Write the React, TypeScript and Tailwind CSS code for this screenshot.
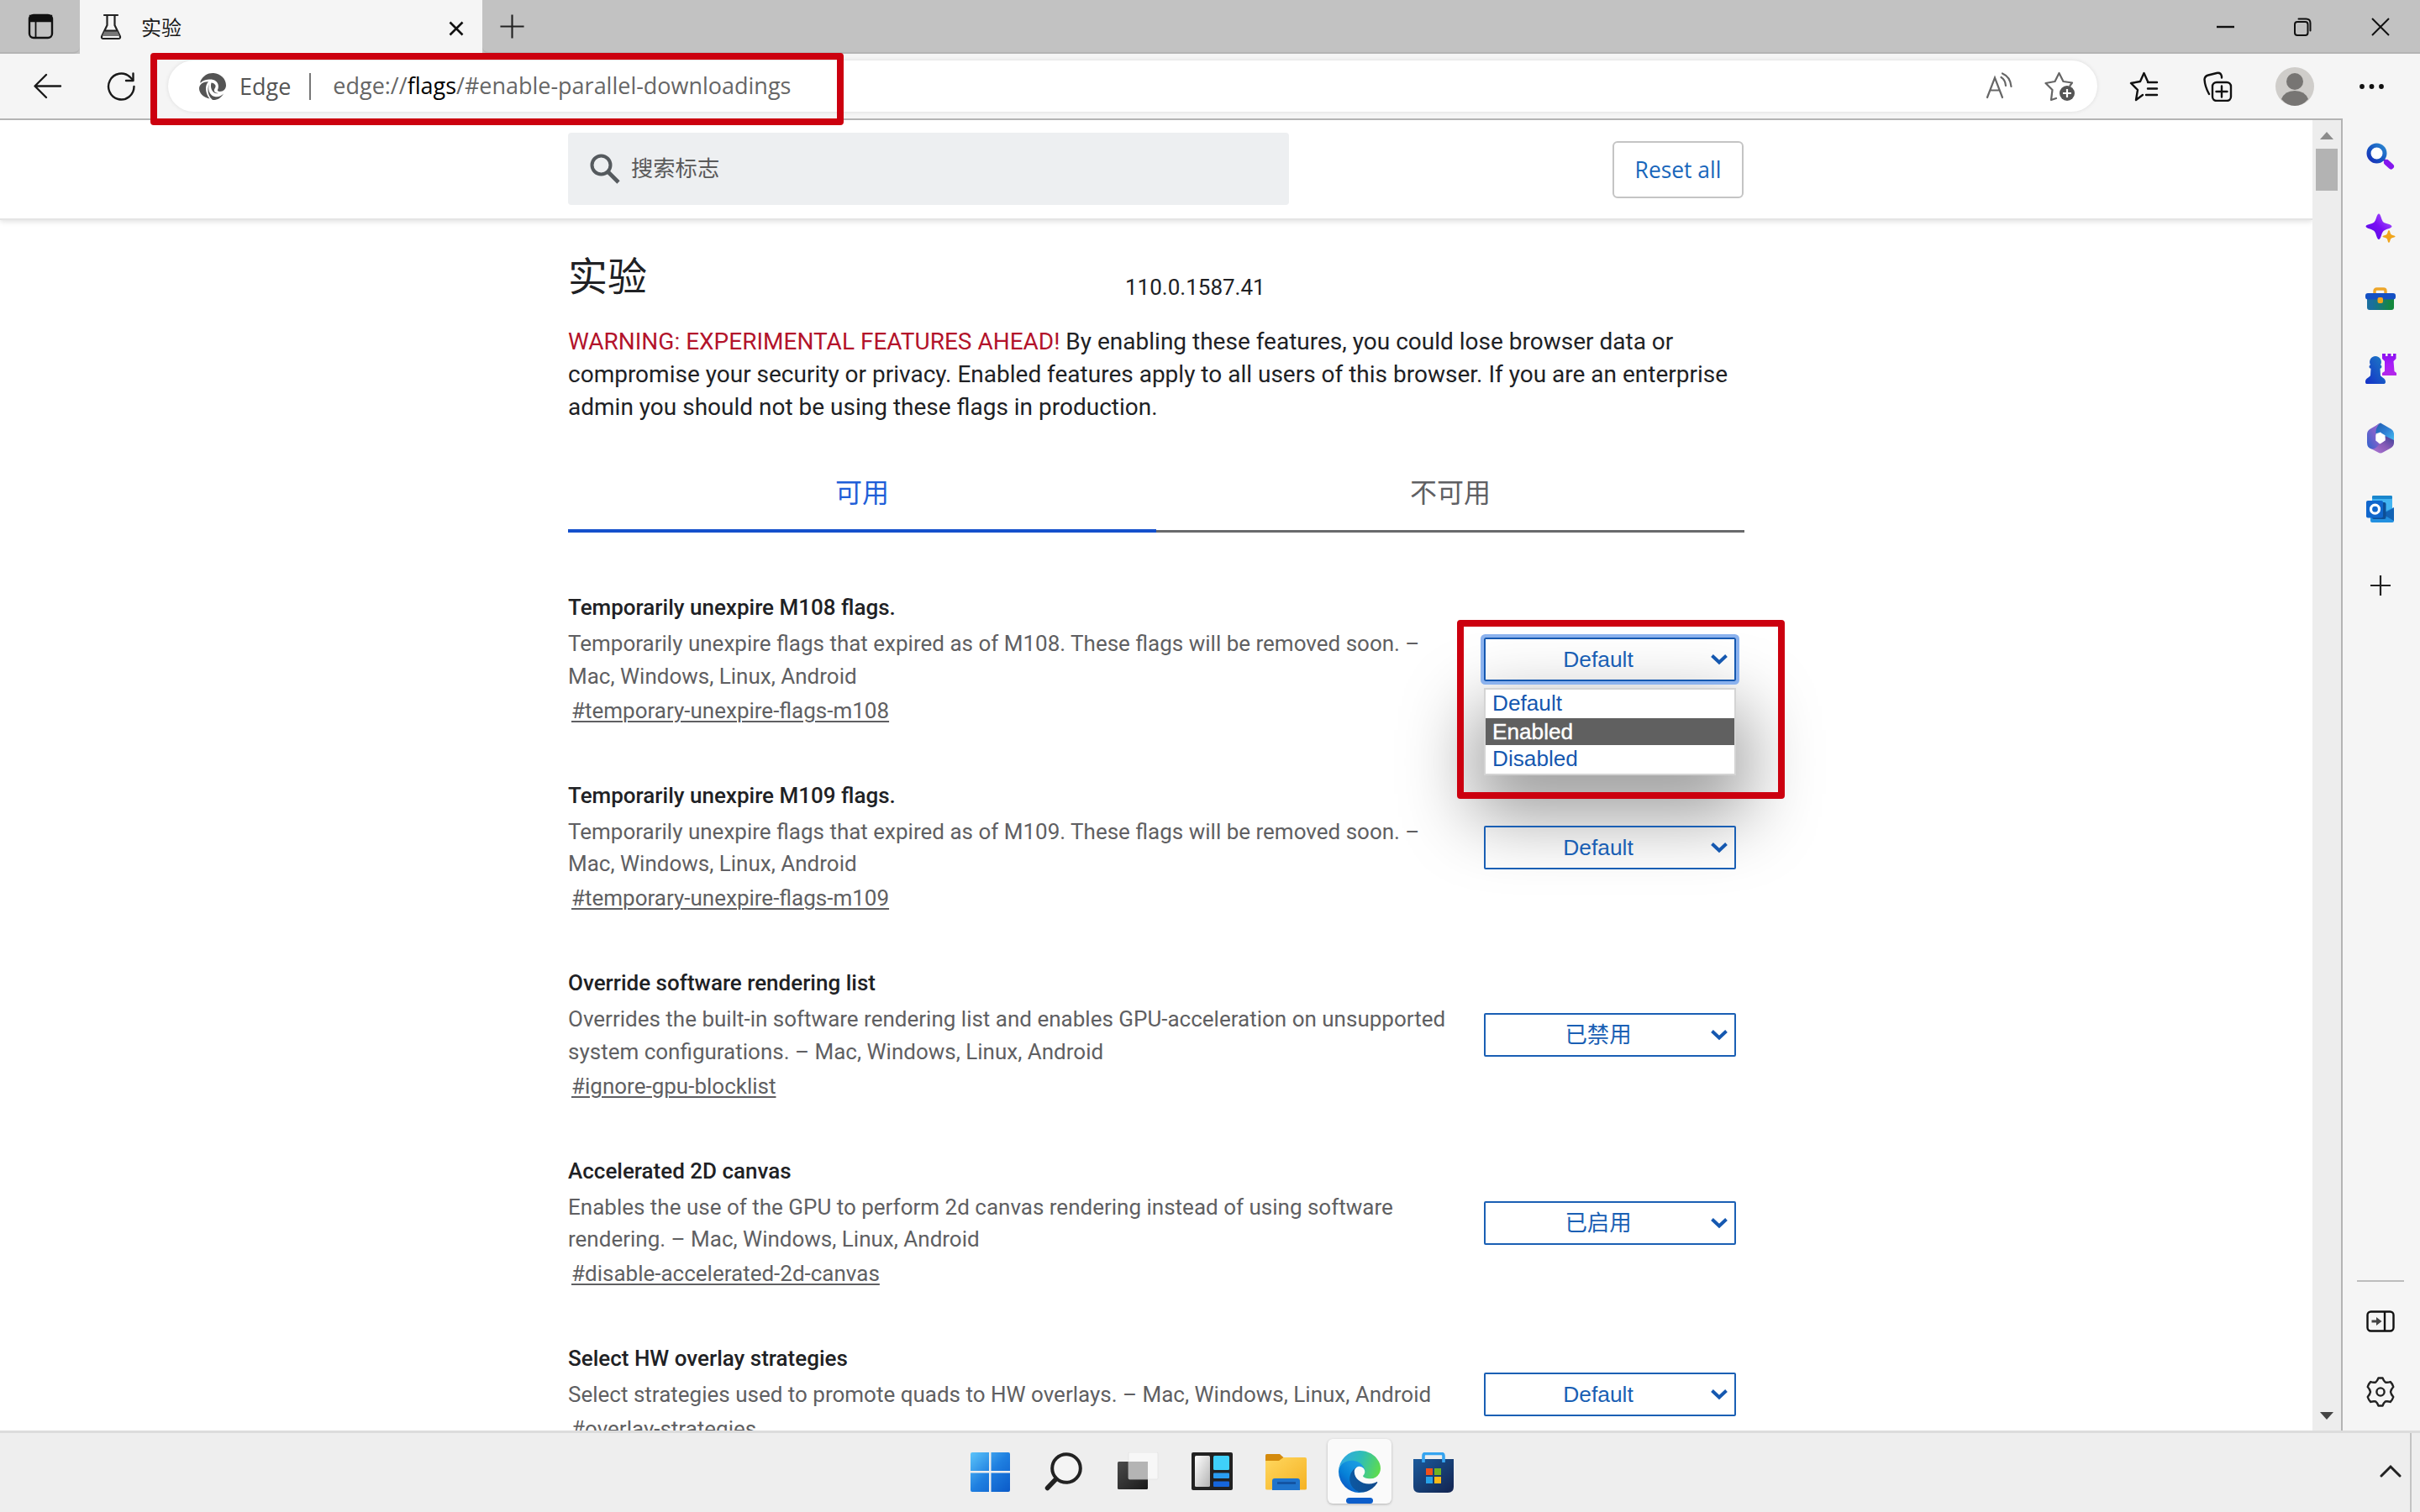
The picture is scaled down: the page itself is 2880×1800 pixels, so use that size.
import React from "react";

type Flag = { title: string; lines: string[]; link: string; value: string; open?: boolean };

const flags: Flag[] = [
  {
    title: "Temporarily unexpire M108 flags.",
    lines: ["Temporarily unexpire flags that expired as of M108. These flags will be removed soon. –", "Mac, Windows, Linux, Android"],
    link: "#temporary-unexpire-flags-m108",
    value: "Default",
    open: true,
  },
  {
    title: "Temporarily unexpire M109 flags.",
    lines: ["Temporarily unexpire flags that expired as of M109. These flags will be removed soon. –", "Mac, Windows, Linux, Android"],
    link: "#temporary-unexpire-flags-m109",
    value: "Default",
  },
  {
    title: "Override software rendering list",
    lines: ["Overrides the built-in software rendering list and enables GPU-acceleration on unsupported", "system configurations. – Mac, Windows, Linux, Android"],
    link: "#ignore-gpu-blocklist",
    value: "已禁用",
  },
  {
    title: "Accelerated 2D canvas",
    lines: ["Enables the use of the GPU to perform 2d canvas rendering instead of using software", "rendering. – Mac, Windows, Linux, Android"],
    link: "#disable-accelerated-2d-canvas",
    value: "已启用",
  },
  {
    title: "Select HW overlay strategies",
    lines: ["Select strategies used to promote quads to HW overlays. – Mac, Windows, Linux, Android"],
    link: "#overlay-strategies",
    value: "Default",
  },
];

function TabStrip() {
  return (
    <div className="flex h-16 shrink-0 bg-[#c2c2c2]">
      <div className="flex w-[95px] items-center rounded-br-lg border-b-2 border-[#b4b4b4] pl-[33px]">
        <svg width="31" height="31" viewBox="0 0 31 31" fill="none" stroke="#111" strokeWidth="2.4">
          <rect x="2" y="2" width="27" height="27" rx="5" />
          <path d="M3 3h25v6H3z" fill="#111" />
          <path d="M9.5 9v20" strokeWidth="1.8" />
        </svg>
      </div>
      <div className="flex w-[479px] items-center bg-[#f5f5f5] pl-[24px]">
        <svg width="26" height="32" viewBox="0 0 26 32" fill="none" stroke="#222" strokeWidth="2.2" strokeLinejoin="round" strokeLinecap="round">
          <path d="M5 2h16M8.5 2v12L2 27.500Q1.500 30 4 30h18q2.500 0 2-2.500L17.500 14V2" />
          <path d="M6 20h14l3.500 7H2.500z" fill="#777" stroke="none" />
          <path d="M6 20.500h14" strokeWidth="1.800" />
        </svg>
        <span className="ml-[23px] text-[24px] leading-none text-[#1a1a1a]">实验</span>
        <svg className="mt-[3px] mr-[22px] ml-auto" width="18" height="18" viewBox="0 0 18 18" stroke="#111" strokeWidth="2.6">
          <path d="M1.500 1.500l15 15M16.500 1.500l-15 15" />
        </svg>
      </div>
      <div className="flex flex-1 items-center rounded-bl-lg border-b-2 border-[#b4b4b4] pl-[20px]">
        <svg width="31" height="31" viewBox="0 0 32 32" stroke="#222" strokeWidth="2.2">
          <path d="M16 1.500v29M1.500 16h29" />
        </svg>
        <div className="ml-auto flex items-center gap-[71px] pt-[2px] pr-[36px]">
          <svg width="21" height="22" viewBox="0 0 21 22" stroke="#111" strokeWidth="2.400">
            <path d="M0 11h21" />
          </svg>
          <svg width="21" height="22" viewBox="0 0 21 22" fill="none" stroke="#111" strokeWidth="2">
            <rect x="1" y="5" width="15.500" height="16" rx="3" />
            <path d="M5.500 1.500h9q5 0 5 5v9" strokeLinecap="round" />
          </svg>
          <svg width="22" height="22" viewBox="0 0 22 22" stroke="#111" strokeWidth="2">
            <path d="M1 1l20 20M21 1L1 21" />
          </svg>
        </div>
      </div>
    </div>
  );
}

function Toolbar() {
  return (
    <div className="flex h-[77px] shrink-0 bg-[#f5f5f5] font-['Open_Sans','Noto_Sans_CJK_SC',sans-serif]">
      <div className="flex w-[200px] items-center pl-[39px]">
        <svg width="35" height="32" viewBox="0 0 35 32" fill="none" stroke="#1a1a1a" strokeWidth="2.400" strokeLinecap="round" strokeLinejoin="round">
          <path d="M33 15.500H3M16 2L2.500 15.500 16 29" />
        </svg>
        <svg className="ml-[53px]" width="35" height="36" viewBox="0 0 35 36" fill="none" stroke="#1a1a1a" strokeWidth="2.400" strokeLinecap="round" strokeLinejoin="round">
          <path d="M32.500 18A15.200 15.500 0 1 1 27.500 6.500L31 10" />
          <path d="M31.500 2.500V11h-8.500" />
        </svg>
      </div>
      <div className="mt-[8px] flex h-[61px] w-[2296px] items-center rounded-full bg-white pl-[36px] shadow-[0_0_5px_rgba(0,0,0,0.1)]">
        <svg width="34" height="34" viewBox="0 0 34 34">
          <path d="M2.500 10.500C6 4 11 1 17 1c9.500 0 16 7 16 14.500 0 4.500-3 7.500-7.500 7.500-2 0-3-.8-2.500-2C26 14 21 8.500 14.500 8.500 9.500 8.500 5.500 9.500 2.500 13z" fill="#545454" />
          <path d="M1 19C1.500 14 6 11 12 11.200 8 15 7.500 24 13.500 31.500 6 30 1 25 1 19z" fill="#545454" />
          <path d="M13.500 13.500C10.500 19 13 27.500 19.500 29c4 .8 8-.5 10.500-3.500C27 31 22 33.500 17 33 11 28 10 19 13.500 13.500z" fill="#545454" />
          <path d="M15.500 12.500C20 13 22 16 19.500 19.500c-1.500 2.500-.5 5 4 5.500-6 1.500-10-6-8-12.500z" fill="#545454" />
        </svg>
        <span className="ml-[15px] text-[27px] leading-none text-[#555]">Edge</span>
        <span className="ml-[22px] h-8 w-[2px] bg-[#777]" />
        <span className="ml-[26px] text-[26.97px] leading-none whitespace-nowrap text-[#666]">
          edge://<span className="text-black">flags</span>/#enable-parallel-downloadings
        </span>
        <div className="ml-auto flex items-center gap-[38px] pr-[25px]">
          <svg width="32" height="34" viewBox="0 0 32 34" fill="none" stroke="#666" strokeWidth="2.200" strokeLinecap="round">
            <path d="M2 30L11 6.500l9 23.500M5.500 21.500h11" />
            <path d="M18.500 6q5 3 5.500 10M20 1.500q9.500 4 10.500 15.500" />
          </svg>
          <svg width="38" height="36" viewBox="0 0 38 36" fill="none">
            <path d="M14 32l-6 2 1.500-12L1.500 14l11-2L17.500 2l5 10 10.500 1.500-2.500 3.500" stroke="#666" strokeWidth="2.200" strokeLinejoin="round" strokeLinecap="round" />
            <circle cx="27" cy="26" r="9" fill="#555" />
            <path d="M27 21v10M22 26h10" stroke="#fff" strokeWidth="2.200" />
          </svg>
        </div>
      </div>
      <div className="flex items-center pl-[38px]">
        <svg width="36" height="36" viewBox="0 0 36 36" fill="none" stroke="#111" strokeWidth="2.400" strokeLinejoin="round" strokeLinecap="round">
          <path d="M16 28l-8 6 2-12-8-8 11-2 4.500-10L22 12M22 13h11M22 20.500h11M20 28h13" />
        </svg>
        <svg className="ml-[51px]" width="36" height="36" viewBox="0 0 36 36" fill="none" stroke="#111" strokeWidth="2.400" strokeLinejoin="round" strokeLinecap="round">
          <path d="M8 27Q3 18 2.500 9.500 3 5.500 7 4.500L17 2q5-1 6 4v1.500" />
          <rect x="12" y="13" width="22" height="22" rx="5" />
          <path d="M23 17.500v13M16.500 24h13" />
        </svg>
        <svg className="ml-[50px]" width="48" height="48" viewBox="0 0 48 48">
          <circle cx="24" cy="24" r="23" fill="#cfcdca" />
          <circle cx="24" cy="18" r="10" fill="#777573" />
          <path d="M8 39q4-10 16-10t16 10Q33 47 24 47T8 39z" fill="#777573" />
        </svg>
        <svg className="ml-[52px]" width="32" height="8" viewBox="0 0 32 8" fill="#111">
          <circle cx="4" cy="4" r="2.900" />
          <circle cx="15.500" cy="4" r="2.900" />
          <circle cx="27" cy="4" r="2.900" />
        </svg>
      </div>
    </div>
  );
}

function Select({ value, open }: { value: string; open?: boolean }) {
  return (
    <div className="relative h-[52px] w-[300px]">
      {open && (
        <div className="absolute top-[60px] left-0 h-[104px] w-[300px] border-2 border-[#d4d4d4] bg-white font-['Liberation_Sans',sans-serif] text-[26.2px] leading-[32px] text-[#1558b0] shadow-[0_36px_84px_14px_rgba(0,0,0,0.38)]">
          <div className="h-[34px] pl-[8px]">Default</div>
          <div className="h-[32px] bg-[#606060] pl-[8px] text-white [-webkit-text-stroke:0.4px_white]">Enabled</div>
          <div className="h-[32px] pl-[8px]">Disabled</div>
        </div>
      )}
      <div
        className={
          open
            ? "relative flex h-full items-center justify-center rounded-[2px] border-2 border-[#1558b0] pr-[28px] shadow-[0_0_0_4px_#8bb2ee]"
            : "relative flex h-full items-center justify-center rounded-[2px] border-2 border-[#1a5fb4] pr-[28px]"
        }
      >
        <span className="font-['Liberation_Sans','Noto_Sans_CJK_SC',sans-serif] text-[26.4px] leading-none text-[#1a5fb4]">{value}</span>
        <svg className="absolute top-[17px] right-[8px]" width="20" height="14" viewBox="0 0 20 14" fill="none" stroke="#1558b0" strokeWidth="4">
          <path d="M1.500 2.500L10 10.500 18.500 2.500" />
        </svg>
      </div>
    </div>
  );
}

function FlagsPage() {
  return (
    <div className="flex w-[2752px] flex-col overflow-hidden bg-white font-['Roboto','Noto_Sans_CJK_SC',sans-serif]">
      <div className="flex h-[119px] shrink-0 border-b-2 border-[#e4e4e4] pl-[676px] shadow-[0_2px_6px_rgba(0,0,0,0.12)]">
        <div className="flex w-[1399px] justify-between">
          <div className="mt-[15px] flex h-[86px] w-[858px] items-center rounded bg-[#edeff1] pl-[26px]">
            <svg width="36" height="36" viewBox="0 0 36 36" fill="none" stroke="#555a5e" strokeWidth="4">
              <circle cx="13.500" cy="13.500" r="11" />
              <path d="M21.500 21.500l12.500 12.500" strokeWidth="4.600" />
            </svg>
            <span className="ml-[13px] text-[26.3px] leading-none text-[#5a5a5a]">搜索标志</span>
          </div>
          <div className="mt-[25px] flex h-[68px] w-[156px] items-center justify-center rounded-md border-2 border-[#c4c4c4] font-['Open_Sans',sans-serif] text-[26.4px] leading-none text-[#1866bb]">
            Reset all
          </div>
        </div>
      </div>

      <div className="ml-[676px] flex w-[1400px] flex-col text-[#202124]">
        <div className="mt-[37px] flex h-[62px] items-end">
          <h1 className="w-[663px] text-[47px] leading-[62px]">实验</h1>
          <span className="text-[26px] leading-[38px]">110.0.1587.41</span>
        </div>
        <p className="mt-[26px] text-[28px] leading-[39px] whitespace-nowrap">
          <span className="text-[#b3132b]">WARNING: EXPERIMENTAL FEATURES AHEAD!</span> By enabling these features, you could lose browser data or
          <br />
          compromise your security or privacy. Enabled features apply to all users of this browser. If you are an enterprise
          <br />
          admin you should not be using these flags in production.
        </p>
        <div className="mt-[42px] flex h-[88px] text-center text-[32px] leading-[82px]">
          <div className="w-[700px] border-b-4 border-[#1450cc] text-[#1f5fd8]">可用</div>
          <div className="flex-1 border-b-[3px] border-[#696a6c] text-[#5f6063]">不可用</div>
        </div>
        <div className="mt-[70px] flex flex-col gap-[62px]">
          {flags.map((f) => (
            <section key={f.title} className="flex items-center">
              <div className="w-[1090px] shrink-0 text-[26px] whitespace-nowrap text-[#5f5f62]">
                <h2 className="leading-[38px] font-medium text-[#202124]">{f.title}</h2>
                <p className="mt-[5px] leading-[38.5px]">
                  {f.lines.map((l) => (
                    <span key={l} className="block">
                      {l}
                    </span>
                  ))}
                </p>
                <a className="mt-[2.500px] ml-1 block w-fit leading-[39px] underline decoration-2 underline-offset-[3px]">{f.link}</a>
              </div>
              <div className="pt-[1px]">
                <Select value={f.value} open={f.open} />
              </div>
            </section>
          ))}
        </div>
      </div>
    </div>
  );
}

function Scrollbar() {
  return (
    <div className="flex flex-1 flex-col items-center bg-[#ededed]">
      <svg className="mt-[14px]" width="16" height="9" viewBox="0 0 16 9">
        <path d="M8 0l8 9H0z" fill="#8c8c8c" />
      </svg>
      <div className="mt-[11px] h-[50px] w-[26px] bg-[#b3b3b3]" />
      <svg className="mt-auto mb-[13px]" width="16" height="9" viewBox="0 0 16 9">
        <path d="M8 9l8-9H0z" fill="#444" />
      </svg>
    </div>
  );
}

function Sidebar() {
  return (
    <div className="flex w-[92px] flex-col items-center bg-[#f5f5f5] pr-[2px]">
      <svg className="mt-[29px]" width="34" height="32" viewBox="0 0 34 32">
        <defs>
          <linearGradient id="lens" x1="1" y1="0" x2="0" y2="1">
            <stop offset="0" stopColor="#2b86cf" />
            <stop offset="0.600" stopColor="#1450c0" />
            <stop offset="1" stopColor="#1c2fb8" />
          </linearGradient>
        </defs>
        <path d="M21 20l9 8.500" stroke="#6a1fd0" strokeWidth="3" />
        <path d="M24.500 23.500l5 4.500" stroke="#8416ee" strokeWidth="7" strokeLinecap="round" />
        <circle cx="12.500" cy="12.500" r="9.500" fill="#fff" stroke="url(#lens)" strokeWidth="5" />
      </svg>
      <svg className="mt-[52px]" width="36" height="35" viewBox="0 0 36 35">
        <defs>
          <linearGradient id="spark" x1="0" y1="1" x2="1" y2="0">
            <stop offset="0" stopColor="#4a10e0" />
            <stop offset="0.500" stopColor="#7a0cf5" />
            <stop offset="1" stopColor="#b36bff" />
          </linearGradient>
        </defs>
        <path d="M16 0.500c2.500 0 3 8 5.500 10s10 2.500 10 5-7.500 3-10 5.500S18.500 31 16 31s-3-7.500-5.500-10S0.500 18 0.500 15.500 8 13 10.500 10.500 13.500 0.500 16 0.500z" fill="url(#spark)" />
        <path d="M28 20c1.200 0 1.500 4 2.500 5s5 1.300 5 2.500-4 1.500-5 2.500-1.300 5-2.500 5-1.500-4-2.500-5-5-1.300-5-2.500 4-1.500 5-2.500 1.300-5 2.500-5z" fill="#f0a51c" />
      </svg>
      <svg className="mt-[53px]" width="36" height="27" viewBox="0 0 36 27">
        <defs>
          <linearGradient id="box">
            <stop offset="0.200" stopColor="#1a6f9e" />
            <stop offset="0.900" stopColor="#14883c" />
          </linearGradient>
        </defs>
        <path d="M11 8V4.500Q11 2 13.500 2h8Q24 2 24 4.500V8" fill="none" stroke="#eda62a" strokeWidth="3.400" />
        <rect x="2" y="10" width="32" height="17" rx="3" fill="url(#box)" />
        <rect x="0" y="7" width="36" height="7.500" rx="3" fill="#1450c4" />
        <rect x="14.500" y="12" width="6.500" height="7" rx="2" fill="#f0a51c" />
      </svg>
      <svg className="mt-[51px]" width="38" height="37" viewBox="0 0 38 37">
        <defs>
          <linearGradient id="pawn" x1="1" y1="0" x2="0" y2="1">
            <stop offset="0" stopColor="#1d7fc4" />
            <stop offset="1" stopColor="#1430c8" />
          </linearGradient>
          <linearGradient id="rook" x1="0" y1="0" x2="0" y2="1">
            <stop offset="0" stopColor="#8a10f0" />
            <stop offset="0.500" stopColor="#a81cf8" />
            <stop offset="1" stopColor="#b428e8" />
          </linearGradient>
        </defs>
        <path d="M21 1h4v3h2.500V1h4v3H34V1h3.500v6l-3 3 1 12 2.500 2v3H21v-3l3-2V10l-3-3z" fill="url(#rook)" />
        <path d="M13 4a7 7 0 0 1 6 10.500c2 .5 2 4-.5 4.200L19 27c1 2.500 6 3 6 7.500 0 2-1 2.500-2.500 2.500h-19C1.500 37 1 36.500 1 34.500 1 30 6 29.500 7 27l.5-8.300C5 18.500 5 15 7 14.500A7 7 0 0 1 13 4z" fill="url(#pawn)" />
      </svg>
      <svg className="mt-[46px]" width="34" height="37" viewBox="0 0 34 37">
        <defs>
          <linearGradient id="officeLeft" x1="1" y1="0" x2="0" y2="1">
            <stop offset="0" stopColor="#9a6ad0" />
            <stop offset="0.450" stopColor="#7c62cc" />
            <stop offset="1" stopColor="#2f62cc" />
          </linearGradient>
          <linearGradient id="officeRight" x1="0" y1="0" x2="1" y2="1">
            <stop offset="0" stopColor="#1f5cae" />
            <stop offset="0.500" stopColor="#2f80d4" />
            <stop offset="1" stopColor="#45c4f4" />
          </linearGradient>
          <linearGradient id="officeBottom" x1="0" y1="1" x2="1" y2="0">
            <stop offset="0" stopColor="#b07ad8" />
            <stop offset="0.500" stopColor="#8a5cb8" />
            <stop offset="1" stopColor="#3c3f98" />
          </linearGradient>
        </defs>
        <path d="M17 .5L30 8q3 2 3 5v11L22 18l-5-6.500-6 2V7q0-4 6-6.500z" fill="url(#officeRight)" />
        <path d="M33 21v3q0 4-4 6.500L20 35.500q-3 2-6 0L4.500 30.500 17 25l5.500-4V16z" fill="url(#officeBottom)" />
        <path d="M17 .5L5 7.500q-4 2-4 6.500v10q0 7 6 7.500 4.500 0 9-6l-4.500-4v-9Q11 5 17 .5z" fill="url(#officeLeft)" />
        <path d="M17 12l5.500 3.200v6.400L17 25l-5.500-3.400v-6.400z" fill="#fff" />
      </svg>
      <svg className="mt-[50px]" width="34" height="33" viewBox="0 0 34 33">
        <rect x="7" y="0" width="24" height="22" rx="1.500" fill="#41b4f2" />
        <rect x="7" y="0" width="24" height="4" rx="1.500" fill="#1a86cc" />
        <path d="M33 14v16q0 2-2 2H7q-2 0-2-2V20h15z" fill="#2390e0" />
        <path d="M33 14.500V30L19 22z" fill="#1262b4" />
        <rect x="7" y="8" width="16.500" height="20" rx="2" fill="#0d4f96" />
        <rect x="0" y="6" width="20" height="20.500" rx="2" fill="#1066cc" />
        <ellipse cx="10.500" cy="16.200" rx="5" ry="5" fill="none" stroke="#fff" strokeWidth="3.200" />
      </svg>
      <svg className="mt-[61px]" width="26" height="26" viewBox="0 0 26 26" stroke="#222" strokeWidth="2.200">
        <path d="M13 1v24M1 13h24" />
      </svg>
      <div className="mt-auto h-[2px] w-[56px] bg-[#bdbdbd]" />
      <svg className="mt-[34px]" width="34" height="26" viewBox="0 0 34 26" fill="none" stroke="#111" strokeWidth="2.400">
        <rect x="1.500" y="1.500" width="31" height="23" rx="4" />
        <path d="M22 1.500v23" />
        <path d="M6.500 11.500H12V8l6.500 5-6.500 5v-3.500H6.500z" fill="#444" stroke="none" />
      </svg>
      <svg className="mt-[53px] mb-[28px]" width="34" height="36" viewBox="0 0 34 36" fill="none" stroke="#222" strokeWidth="2.400" strokeLinejoin="round">
        <path d="M14.500 1.500h5q1.500 3.800 3.200 5 2.500.8 6-.5 2.300 2 3.600 6-2.800 3-3.300 6 .5 3 3.300 6-1.300 4-3.600 6-3.500-1.300-6-.5-1.700 1.200-3.200 5h-5q-1.500-3.800-3.200-5-2.500-.8-6 .5-2.300-2-3.600-6 2.800-3 3.300-6-.5-3-3.300-6 1.300-4 3.600-6 3.500 1.300 6 .5 1.700-1.200 3.200-5z" />
        <circle cx="17" cy="18" r="4.600" />
      </svg>
    </div>
  );
}

function EdgeLogo() {
  return (
    <svg width="50" height="50" viewBox="0 0 256 256">
      <defs>
        <linearGradient id="e1" gradientUnits="userSpaceOnUse" x1="63" y1="178" x2="241" y2="178">
          <stop offset="0" stopColor="#0c59a4" />
          <stop offset="1" stopColor="#114a8b" />
        </linearGradient>
        <linearGradient id="e2" gradientUnits="userSpaceOnUse" x1="157" y1="98" x2="46" y2="218">
          <stop offset="0" stopColor="#1b9de2" />
          <stop offset="0.300" stopColor="#1595df" />
          <stop offset="0.700" stopColor="#0680d7" />
          <stop offset="1" stopColor="#0a62c9" />
        </linearGradient>
        <linearGradient id="e3" gradientUnits="userSpaceOnUse" x1="20" y1="60" x2="250" y2="140">
          <stop offset="0" stopColor="#2fa9e0" />
          <stop offset="0.450" stopColor="#2ebdb8" />
          <stop offset="1" stopColor="#5fdc4c" />
        </linearGradient>
      </defs>
      <g transform="translate(-4.630 -4.920)">
        <path fill="url(#e1)" d="M235.680 195.460a93.730 93.730 0 0 1-10.540 4.710 101.870 101.870 0 0 1-35.900 6.460c-47.320 0-88.540-32.550-88.540-74.320A31.480 31.480 0 0 1 117.130 105c-42.800 1.800-53.800 46.400-53.800 72.530 0 73.880 68.090 81.370 82.760 81.370 7.910 0 19.840-2.300 27-4.560l1.310-.44a128.340 128.340 0 0 0 66.600-52.800 4 4 0 0 0-5.320-5.640z" />
        <path fill="url(#e2)" d="M110.340 246.340A79.200 79.200 0 0 1 87.600 225a80.720 80.720 0 0 1 29.530-120c3.120-1.470 8.450-4.130 15.540-4a32.350 32.350 0 0 1 25.690 13 31.880 31.880 0 0 1 6.360 18.660c0-.21 24.460-79.600-80-79.600-43.900 0-80 41.660-80 78.210a130.150 130.150 0 0 0 12.110 56 128 128 0 0 0 156.380 67.110 75.550 75.550 0 0 1-62.780-8z" />
        <path fill="url(#e3)" d="M156.940 153.780c-.81 1.050-3.300 2.500-3.300 5.660 0 2.610 1.700 5.120 4.720 7.230 14.380 10 41.490 8.680 41.560 8.680a59.560 59.560 0 0 0 30.270-8.350 61.380 61.380 0 0 0 30.430-52.880c.26-22.410-8-37.310-11.340-43.910-21.190-41.450-66.930-65.290-116.670-65.290a128 128 0 0 0-128 126.200c.48-36.540 36.800-66.050 80-66.050 3.500 0 23.460.34 42 10.070 16.340 8.580 24.900 18.940 30.850 29.210 6.180 10.670 7.280 24.150 7.280 29.520s-2.740 13.330-7.800 19.910z" />
      </g>
    </svg>
  );
}

function Taskbar() {
  return (
    <div className="flex h-[97px] shrink-0 border-t-[3px] border-[#dcdcdc] bg-[#eeeeee]">
      <div className="flex w-[2870px] items-start border-r-2 border-[#c4c4c4] pl-[1155px]">
        <svg className="mt-[23px]" width="47" height="47" viewBox="0 0 47 47">
          <defs>
            <linearGradient id="win" gradientUnits="userSpaceOnUse" x1="0" y1="0" x2="47" y2="47">
              <stop offset="0" stopColor="#5cc4fa" />
              <stop offset="0.500" stopColor="#1f7fe0" />
              <stop offset="1" stopColor="#0a5ac8" />
            </linearGradient>
          </defs>
          <path d="M2 0h20v22H0V2q0-2 2-2zM24.500 0H45q2 0 2 2v20H24.500zM0 24.500h22V47H2q-2 0-2-2zM24.500 24.500H47V45q0 2-2 2H24.500z" fill="url(#win)" />
        </svg>
        <svg className="mt-[23px] ml-[41px]" width="46" height="47" viewBox="0 0 46 47" fill="none" stroke="#222" strokeLinecap="round">
          <circle cx="26" cy="19" r="16.800" strokeWidth="4" fill="#f4f4f4" />
          <path d="M13.500 32L3.500 42.500" strokeWidth="5.500" />
        </svg>
        <svg className="mt-[23px] ml-[41px]" width="49" height="45" viewBox="0 0 49 45">
          <defs>
            <linearGradient id="tv" x1="0" y1="0" x2="1" y2="1">
              <stop offset="0" stopColor="#4a4a4a" />
              <stop offset="1" stopColor="#1a1a1a" />
            </linearGradient>
          </defs>
          <rect x="0" y="11" width="36" height="33" rx="1.500" fill="url(#tv)" />
          <rect x="13" y="0" width="35" height="32" rx="1.500" fill="#fff" fillOpacity="0.550" stroke="#ddd" strokeOpacity="0.600" />
          <path d="M13 11h23v20H13z" fill="#b4b4b4" />
        </svg>
        <svg className="mt-[23px] ml-[39px]" width="49" height="45" viewBox="0 0 49 45">
          <defs>
            <linearGradient id="wg" x1="0" y1="0" x2="1" y2="1">
              <stop offset="0" stopColor="#fff" />
              <stop offset="1" stopColor="#b4b4b4" />
            </linearGradient>
          </defs>
          <rect width="49" height="45" rx="2" fill="#222" />
          <rect x="4" y="4" width="18" height="37" rx="1.500" fill="url(#wg)" />
          <rect x="26" y="4" width="19" height="17" rx="1.500" fill="#3fd0fa" />
          <rect x="26" y="24.500" width="19" height="6.500" rx="1" fill="#2a9df0" />
          <rect x="26" y="34.500" width="19" height="6.500" rx="1" fill="#1666dc" />
        </svg>
        <svg className="mt-[25px] ml-[39px]" width="49" height="43" viewBox="0 0 49 43">
          <defs>
            <linearGradient id="fold" x1="0" y1="0" x2="1" y2="1">
              <stop offset="0" stopColor="#ffd75e" />
              <stop offset="1" stopColor="#f5b224" />
            </linearGradient>
          </defs>
          <path d="M0 1.500Q0 0 1.500 0H17l5 4.500L17 9H0z" fill="#d48a0c" />
          <path d="M0 8h16l5.500-4H47q2 0 2 2v35q0 1.500-2 1.500H2q-2 0-2-1.500z" fill="url(#fold)" />
          <path d="M8 43V32q0-3 3-3h27q3 0 3 3v11z" fill="#1f74cc" />
          <path d="M14 34.500h22" stroke="#124f9c" strokeWidth="2.500" />
        </svg>
        <div className="mt-[7px] ml-[25px] flex h-[77px] w-[76px] flex-col items-center rounded-md bg-[#fafafa] pt-[14px] shadow-[0_1px_3px_rgba(0,0,0,0.25)]">
          <EdgeLogo />
          <div className="mt-[6px] h-[7px] w-8 rounded-full bg-[#0d5ecb]" />
        </div>
        <svg className="mt-[23px] ml-[26px]" width="48" height="48" viewBox="0 0 48 48">
          <defs>
            <linearGradient id="store" x1="0" y1="0" x2="1" y2="1">
              <stop offset="0" stopColor="#1a5a9c" />
              <stop offset="1" stopColor="#13234f" />
            </linearGradient>
          </defs>
          <path d="M0 8h48v33q0 7-7 7H7q-7 0-7-7z" fill="url(#store)" />
          <path d="M12 12V4q0-2.500 2.500-2.500h19Q36 1.500 36 4v8" fill="none" stroke="#35a4f0" strokeWidth="3.600" />
          <path d="M15 19h8v8h-8z" fill="#f1511b" />
          <path d="M25 19h8v8h-8z" fill="#6fb321" />
          <path d="M15 29h8v8h-8z" fill="#28a3ea" />
          <path d="M25 29h8v8h-8z" fill="#fbb817" />
        </svg>
        <svg className="mt-[37px] mr-[10px] ml-auto" width="26" height="16" viewBox="0 0 26 16" fill="none" stroke="#222" strokeWidth="3" strokeLinecap="round">
          <path d="M2 14L13 3l11 11" />
        </svg>
      </div>
    </div>
  );
}

export default function App() {
  return (
    <div className="relative flex h-[1800px] w-[2880px] flex-col overflow-hidden bg-white font-['Noto_Sans_CJK_SC',sans-serif]">
      <TabStrip />
      <Toolbar />
      <div className="flex h-[1562px] shrink-0">
        <div className="flex w-[2788px] border-t-2 border-r-2 border-[#b4b4b4]">
          <FlagsPage />
          <Scrollbar />
        </div>
        <Sidebar />
      </div>
      <Taskbar />
      <div className="absolute top-[63px] left-[179px] h-[86px] w-[825px] rounded-[4px] border-8 border-[#cc000f]" />
      <div className="absolute top-[738px] left-[1734px] h-[213px] w-[390px] rounded-[4px] border-8 border-[#cc000f]" />
    </div>
  );
}
